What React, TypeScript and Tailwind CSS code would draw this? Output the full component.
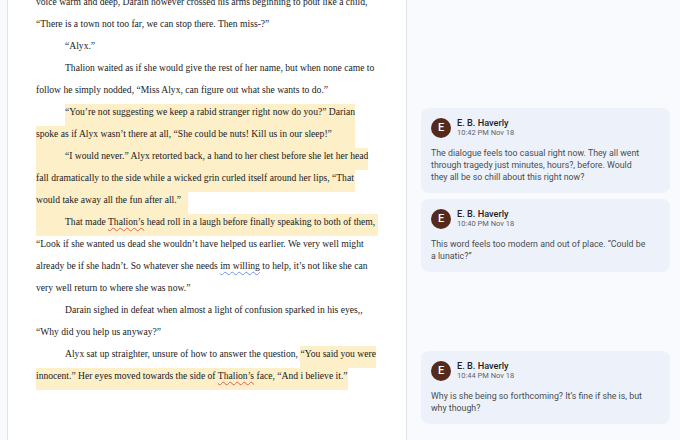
import type { ReactNode } from "react"

const serif = { fontFamily: '"Liberation Serif", "Times New Roman", serif' }

function Line({ indent, children }: { indent?: boolean; children: ReactNode }) {
  return (
    <div className="flex h-[22px] items-start whitespace-pre pl-[28px] leading-[16px]">
      {indent && <span className="w-[29px] shrink-0" />}
      {children}
    </div>
  )
}

function Hl({ className, children }: { className?: string; children: ReactNode }) {
  return <span className={"block h-[22px] shrink-0 bg-[#fdefc7] " + (className ?? "")}>{children}</span>
}

function Red({ children }: { children: ReactNode }) {
  return (
    <span className="underline decoration-[#e06055] decoration-wavy decoration-1 underline-offset-[2px]">
      {children}
    </span>
  )
}

function Blue({ children }: { children: ReactNode }) {
  return (
    <span className="underline decoration-[#6f95e3] decoration-wavy decoration-1 underline-offset-[2px]">
      {children}
    </span>
  )
}

const comments = [
  {
    time: "10:42 PM Nov 18",
    body: [
      "The dialogue feels too casual right now. They all went",
      "through tragedy just minutes, hours?, before. Would",
      "they all be so chill about this right now?",
    ],
    space: "mt-[108px]",
  },
  {
    time: "10:40 PM Nov 18",
    body: ["This word feels too modern and out of place. “Could be", "a lunatic?”"],
    space: "mt-[6px]",
  },
  {
    time: "10:44 PM Nov 18",
    body: ["Why is she being so forthcoming? It’s fine if she is, but", "why though?"],
    space: "mt-[79px]",
  },
]

function CommentCard({ time, body, space }: { time: string; body: string[]; space: string }) {
  return (
    <div className={"rounded-[8px] bg-[#edf2fa] px-[10px] pt-[10px] pb-[10px] " + space}>
      <div className="flex items-center gap-[6px]">
        <div className="flex h-[20px] w-[20px] items-center justify-center rounded-full bg-[#552a1c] text-[11px] font-medium text-white">
          E
        </div>
        <div>
          <div className="text-[9.2px] leading-[10px] font-medium text-[#1f1f1f]">E. B. Haverly</div>
          <div className="text-[7.5px] leading-[10px] text-[#5f6368]">{time}</div>
        </div>
      </div>
      <div className="mt-[9px] text-[8.8px] leading-[12px] text-[#4a4c4f]">
        {body.map((l) => (
          <div key={l} className="whitespace-nowrap">
            {l}
          </div>
        ))}
      </div>
    </div>
  )
}

export default function App() {
  return (
    <div
      className="flex h-[440px] w-[680px] overflow-hidden bg-[#f8fafd]"
      style={{ fontFamily: 'Roboto, "Noto Sans", sans-serif' }}
    >
      {/* Document page */}
      <div className="ml-[7px] w-[400px] shrink-0 border-x border-[#e1e3e6] bg-white">
        <div className="-mt-[6px] text-[9.6px] text-[#202124]" style={serif}>
          <Line>voice warm and deep, Darain however crossed his arms beginning to pout like a child,</Line>
          <Line>“There is a town not too far, we can stop there. Then miss-?”</Line>
          <Line indent>“Alyx.”</Line>
          <Line indent>Thalion waited as if she would give the rest of her name, but when none came to</Line>
          <Line>follow he simply nodded, “Miss Alyx, can figure out what she wants to do.”</Line>
          <Line indent>
            <Hl className="w-[290px]">“You’re not suggesting we keep a rabid stranger right now do you?” Darian</Hl>
          </Line>
          <Line>
            <Hl className="w-[319px]">spoke as if Alyx wasn’t there at all, “She could be nuts! Kill us in our sleep!”</Hl>
          </Line>
          <Line>
            <Hl className="w-[332px] pl-[29px]">“I would never.” Alyx retorted back, a hand to her chest before she let her head</Hl>
          </Line>
          <Line>
            <Hl className="w-[319px]">fall dramatically to the side while a wicked grin curled itself around her lips, “That</Hl>
          </Line>
          <Line>
            <Hl className="w-[152px]">would take away all the fun after all.”</Hl>
          </Line>
          <Line>
            <Hl className="w-[342px] pl-[29px]">
              That made <Red>Thalion’s</Red> head roll in a laugh before finally speaking to both of them,
            </Hl>
          </Line>
          <Line>“Look if she wanted us dead she wouldn’t have helped us earlier. We very well might</Line>
          <Line>
            already be if she hadn’t. So whatever she needs <Blue>im willing</Blue> to help, it’s not like she can
          </Line>
          <Line>very well return to where she was now.”</Line>
          <Line indent>Darain sighed in defeat when almost a light of confusion sparked in his eyes,,</Line>
          <Line>“Why did you help us anyway?”</Line>
          <Line indent>
            <span>Alyx sat up straighter, unsure of how to answer the question, </span>
            <Hl>“You said you were</Hl>
          </Line>
          <Line>
            <Hl>
              innocent.” Her eyes moved towards the side of <Red>Thalion’s</Red> face, “And i believe it.”
            </Hl>
          </Line>
        </div>
      </div>

      {/* Comments */}
      <div className="flex-1 pl-[14px] pr-[10px]">
        {comments.map((c) => (
          <CommentCard key={c.time} {...c} />
        ))}
      </div>
    </div>
  )
}
